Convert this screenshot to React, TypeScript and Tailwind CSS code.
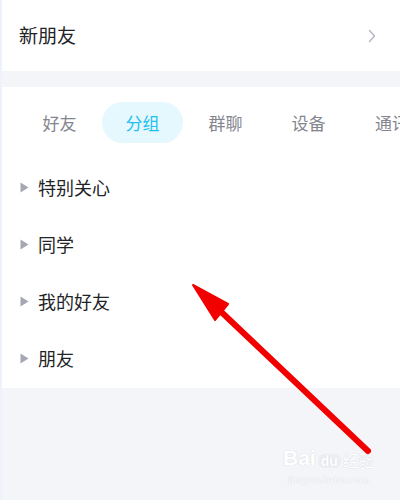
import React from "react";

const tabs = ["好友", "分组", "群聊", "设备", "通讯录"];
const groups = ["特别关心", "同学", "我的好友", "朋友"];

export default function App() {
  return (
    <div
      className="relative w-[400px] h-[500px] overflow-hidden bg-[#f4f5f9] border-l-2 border-[#eef3fb]"
      style={{ fontFamily: '"Noto Sans CJK SC", "Noto Sans", sans-serif' }}
    >
      <div className="h-[71px] bg-white flex items-center justify-between pl-[17px] pr-[24px]">
        <span className="text-[19px] text-[#222326]">新朋友</span>
        <svg width="8" height="14" viewBox="0 0 8 14">
          <path d="M1.5 1.5 L6.5 7 L1.5 12.5" fill="none" stroke="#b4b5c0" strokeWidth="1.4" strokeLinecap="round" strokeLinejoin="round" />
        </svg>
      </div>
      <div className="h-[16px]" />
      <div className="bg-white h-[301px] flex flex-col">
        <div className="flex gap-[2px] pl-[17px] pt-[15px] whitespace-nowrap">
          {tabs.map((t, i) => (
            <div
              key={t}
              className={
                "h-[41px] shrink-0 rounded-full flex items-center text-[17px] " +
                (i === 4 ? "w-[81px] justify-start pl-[24px] " : "w-[81px] justify-center ") +
                (i === 1 ? "bg-[#e5f8fe] text-[#1fc0f0]" : "text-[#84868f]")
              }
            >
              {t}
            </div>
          ))}
        </div>
        <div className="flex flex-col pt-[16px]">
          {groups.map((g) => (
            <div key={g} className="h-[57px] flex items-center pl-[18px]">
              <svg width="9" height="11" viewBox="0 0 9 11" className="mr-[9px]">
                <path d="M0.5 0.5 L8.5 5.5 L0.5 10.5 Z" fill="#a5a7b3" />
              </svg>
              <span className="text-[18px] text-[#222326]">{g}</span>
            </div>
          ))}
        </div>
      </div>

      <div
        className="absolute left-[281px] top-[447px] flex flex-col items-center text-white select-none"
        style={{ textShadow: "0 0 1px #d6d8de, 0 0 1px #d6d8de" }}
      >
        <div className="flex items-end leading-none">
          <span className="text-[21px] font-bold" style={{ fontFamily: '"Liberation Sans", sans-serif' }}>Bai</span>
          <span className="text-[14px] font-bold mx-[2px] px-[3px] rounded-[6px] bg-[#eceef2]" style={{ fontFamily: '"Liberation Sans", sans-serif' }}>du</span>
          <span className="text-[16px]">经验</span>
        </div>
        <span className="text-[11px] leading-none mt-[6px]" style={{ fontFamily: '"Liberation Serif", serif' }}>jingyan.baidu.com</span>
      </div>

      <svg className="absolute left-0 top-0" width="400" height="500" viewBox="0 0 400 500">
        <line x1="213" y1="306" x2="366" y2="451" stroke="#f20000" strokeWidth="6" strokeLinecap="round" />
        <path d="M191 285 L226 304 L213 320 Z" fill="#f20000" stroke="#f20000" strokeWidth="2" strokeLinejoin="round" />
      </svg>
    </div>
  );
}
